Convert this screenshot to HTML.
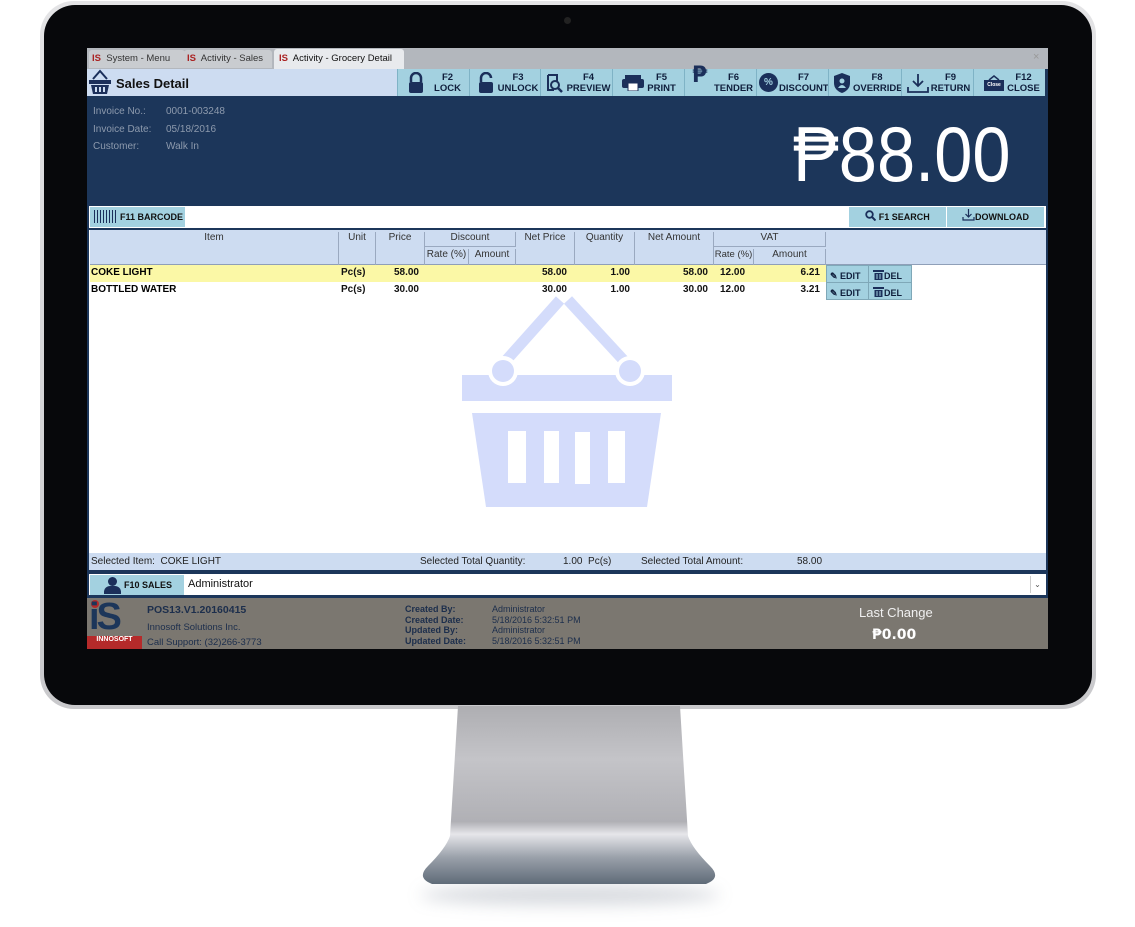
<!DOCTYPE html>
<html><head><meta charset="utf-8"><style>
*{box-sizing:border-box;margin:0;padding:0}
body{width:1135px;height:927px;background:#fff;position:relative;overflow:hidden;font-family:"Liberation Sans",sans-serif}
.a{position:absolute}
.t{font-size:10px;color:#222}
.b{font-weight:bold}
.btn{position:absolute;top:69px;height:27px;background:#a3d1e0;border-left:1px solid #7fb3c6;font-size:9.5px;font-weight:bold;color:#0f1e3c;text-align:center;line-height:11px}
.btn svg{position:absolute}
.hd{position:absolute;font-size:10px;color:#333;text-align:center;border-right:1px solid #9aa9c0}
.c{position:absolute;font-size:10px;font-weight:bold;color:#111;text-align:right}
</style></head><body>
<!-- monitor -->
<div class="a" style="left:40px;top:1px;width:1056px;height:708px;border-radius:34px;background:linear-gradient(#e4e4e6,#c9c9cc);"></div>
<div class="a" style="left:44px;top:5px;width:1048px;height:700px;border-radius:31px;background:#07080b"></div>
<div class="a" style="left:564px;top:17px;width:7px;height:7px;border-radius:50%;background:#222"></div>
<!-- stand -->
<div class="a" style="left:420px;top:885px;width:300px;height:20px;border-radius:50%;background:rgba(90,105,125,.25);filter:blur(8px)"></div>
<svg class="a" style="left:410px;top:706px" width="320" height="185"><defs><linearGradient id="g" x1="0" y1="0" x2="0" y2="1"><stop offset="0" stop-color="#aeaeb2"/><stop offset=".3" stop-color="#c4c4c8"/><stop offset=".65" stop-color="#b0b0b5"/><stop offset=".72" stop-color="#e6e6ea"/><stop offset=".85" stop-color="#9aa1aa"/><stop offset="1" stop-color="#5f6b78"/></linearGradient></defs><path d="M48 0H270L278 130Q282 142 300 160Q312 172 296 178H22Q6 172 18 160Q36 142 40 130Z" fill="url(#g)"/></svg>
<!-- screen -->
<div class="a" style="left:87px;top:48px;width:961px;height:601px;background:#1c365a"></div>
<div class="a" style="left:87px;top:48px;width:961px;height:21px;background:#b3b7bd"></div>
<div class="a" style="left:89px;top:50px;width:96px;height:18px;background:#c9ccd0;border-radius:3px 3px 0 0"></div>
<div class="a" style="left:184px;top:50px;width:88px;height:18px;background:#c9ccd0;border-radius:3px 3px 0 0"></div>
<div class="a" style="left:274px;top:49px;width:130px;height:20px;background:#e8eaed;border-radius:3px 3px 0 0"></div>
<div class="a t" style="left:92px;top:53px;font-size:9.5px;color:#333"><b style="color:#a22">IS</b>&nbsp; System - Menu</div>
<div class="a t" style="left:187px;top:53px;font-size:9.5px;color:#333"><b style="color:#a22">IS</b>&nbsp; Activity - Sales</div>
<div class="a t" style="left:279px;top:53px;font-size:9.5px;color:#111"><b style="color:#a22">IS</b>&nbsp; Activity - Grocery Detail</div>
<div class="a" style="left:1033px;top:51px;font-size:11px;color:#999">×</div>
<div class="a" style="left:87px;top:69px;width:310px;height:27px;background:#cddcf1"></div>
<svg class="a" style="left:88px;top:69px" width="25" height="26"><path d="M5 10L12 2L19 10" stroke="#1b2f5a" stroke-width="2" fill="none"/><rect x="1" y="11" width="22" height="4" fill="#1b2f5a"/><path d="M3 16H21L19 25H5Z" fill="#1b2f5a"/><g fill="#cddcf1"><rect x="7" y="18" width="2" height="5"/><rect x="11" y="18" width="2" height="5"/><rect x="15" y="18" width="2" height="5"/></g></svg>
<div class="a b" style="left:116px;top:76px;font-size:13px;color:#111">Sales Detail</div>
<div class="btn" style="left:397px;width:72px"><svg style="left:10px;top:3px" width="16" height="22"><path d="M3 10V6A5 5 0 0 1 13 6V10" stroke="#1b2f5a" stroke-width="2.5" fill="none"/><rect x="1" y="10" width="14" height="11" rx="2" fill="#1b2f5a"/></svg><div style="margin-left:28px;margin-top:3px">F2<br>LOCK</div></div>
<div class="btn" style="left:469px;width:71px"><svg style="left:8px;top:3px" width="16" height="22"><path d="M3 10V6A5 5 0 0 1 13 6" stroke="#1b2f5a" stroke-width="2.5" fill="none"/><rect x="1" y="10" width="14" height="11" rx="2" fill="#1b2f5a"/></svg><div style="margin-left:26px;margin-top:3px">F3<br>UNLOCK</div></div>
<div class="btn" style="left:540px;width:72px"><svg style="left:4px;top:4px" width="18" height="20"><path d="M3 2H12V8M3 2V17H9" stroke="#1b2f5a" stroke-width="2" fill="none"/><circle cx="10" cy="12" r="4" stroke="#1b2f5a" stroke-width="2" fill="none"/><path d="M13 15L17 19" stroke="#1b2f5a" stroke-width="2.5"/></svg><div style="margin-left:24px;margin-top:3px">F4<br>PREVIEW</div></div>
<div class="btn" style="left:612px;width:72px"><svg style="left:9px;top:6px" width="22" height="16"><rect x="3" y="0" width="16" height="4" fill="#1b2f5a"/><rect x="0" y="4" width="22" height="9" rx="2" fill="#1b2f5a"/><rect x="6" y="8" width="10" height="8" fill="#fff" stroke="#1b2f5a"/></svg><div style="margin-left:26px;margin-top:3px">F5<br>PRINT</div></div>
<div class="btn" style="left:684px;width:72px"><span style="position:absolute;left:7px;top:1px;font-size:22px;color:#1b2f5a;font-family:'DejaVu Sans',sans-serif">₱</span><div style="margin-left:26px;margin-top:3px">F6<br>TENDER</div></div>
<div class="btn" style="left:756px;width:72px"><span style="position:absolute;left:2px;top:4px;width:19px;height:19px;border-radius:50%;background:#1b2f5a;color:#a3d1e0;font-size:10px;line-height:19px">%</span><div style="margin-left:22px;margin-top:3px">F7<br>DISCOUNT</div></div>
<div class="btn" style="left:828px;width:73px"><svg style="left:5px;top:4px" width="16" height="20"><path d="M8 0L16 3V10Q16 17 8 20Q0 17 0 10V3Z" fill="#1b2f5a"/><circle cx="8" cy="8" r="2.5" fill="#a3d1e0"/><path d="M4 15Q8 9 12 15Z" fill="#a3d1e0"/></svg><div style="margin-left:24px;margin-top:3px">F8<br>OVERRIDE</div></div>
<div class="btn" style="left:901px;width:72px"><svg style="left:5px;top:4px" width="22" height="20"><path d="M11 1V13M6 8L11 13L16 8M1 14V19H21V14" stroke="#1b2f5a" stroke-width="1.8" fill="none"/></svg><div style="margin-left:26px;margin-top:3px">F9<br>RETURN</div></div>
<div class="btn" style="left:973px;width:72px"><svg style="left:9px;top:4px" width="22" height="20"><path d="M6 7L11 3L16 7" stroke="#1b2f5a" stroke-width="1.5" fill="none"/></svg><span style="position:absolute;left:10px;top:11px;width:20px;height:11px;background:#1b2f5a;color:#fff;font-size:5px;line-height:11px">Close</span><div style="margin-left:28px;margin-top:3px">F12<br>CLOSE</div></div>
<div class="a" style="left:93px;top:103px;font-size:10px;color:#8d9aad;line-height:17.5px">Invoice No.:<br>Invoice Date:<br>Customer:</div>
<div class="a" style="left:166px;top:103px;font-size:10px;color:#8d9aad;line-height:17.5px">0001-003248<br>05/18/2016<br>Walk In</div>
<div class="a" style="left:793px;top:115px;font-size:78px;line-height:78px;color:#fff;font-family:'Liberation Sans','DejaVu Sans',sans-serif;transform:scaleX(0.88);transform-origin:0 0;white-space:nowrap">₱88.00</div>
<!-- barcode row -->
<div class="a" style="left:89px;top:206px;width:957px;height:22px;background:#fff"></div>
<div class="a b" style="left:90px;top:207px;width:95px;height:20px;background:#a3d1e0;font-size:9px;line-height:20px;padding-left:30px;color:#111">F11 BARCODE</div>
<div class="a" style="left:94px;top:210px;width:22px;height:13px;background:repeating-linear-gradient(90deg,#1b2f5a 0 1px,transparent 1px 3px)"></div>
<div class="a b" style="left:849px;top:207px;width:97px;height:20px;background:#a3d1e0;font-size:9px;line-height:20px;text-align:center;color:#111"><svg width="11" height="11" style="vertical-align:-1px"><circle cx="4.5" cy="4.5" r="3.3" stroke="#1b2f5a" stroke-width="1.8" fill="none"/><path d="M7 7L10.5 10.5" stroke="#1b2f5a" stroke-width="2"/></svg> F1 SEARCH</div>
<div class="a b" style="left:947px;top:207px;width:97px;height:20px;background:#a3d1e0;font-size:9px;line-height:20px;text-align:center;color:#111"><svg width="13" height="12" style="vertical-align:-1px"><path d="M6.5 0V8M3.5 5L6.5 8L9.5 5M1 8V11H12V8" stroke="#1b2f5a" stroke-width="1.2" fill="none"/></svg>DOWNLOAD</div>
<!-- grid -->
<div class="a" style="left:89px;top:230px;width:957px;height:323px;background:#fff"></div>
<div class="a" style="left:90px;top:230px;width:956px;height:35px;background:#cddcf1;border-bottom:1px solid #8f9fb8"></div>
<div class="hd" style="left:90px;top:232px;width:249px;height:33px">Item</div>
<div class="hd" style="left:339px;top:232px;width:37px;height:33px">Unit</div>
<div class="hd" style="left:376px;top:232px;width:49px;height:33px">Price</div>
<div class="hd" style="left:425px;top:232px;width:91px;height:15px;border-bottom:1px solid #9aa9c0">Discount</div>
<div class="hd" style="left:425px;top:249px;width:44px;height:16px">Rate (%)</div>
<div class="hd" style="left:469px;top:249px;width:47px;height:16px">Amount</div>
<div class="hd" style="left:516px;top:232px;width:59px;height:33px">Net Price</div>
<div class="hd" style="left:575px;top:232px;width:60px;height:33px">Quantity</div>
<div class="hd" style="left:635px;top:232px;width:79px;height:33px">Net Amount</div>
<div class="hd" style="left:714px;top:232px;width:112px;height:15px;border-bottom:1px solid #9aa9c0">VAT</div>
<div class="hd" style="left:714px;top:249px;width:40px;height:16px;font-size:9.5px;white-space:nowrap;overflow:hidden">Rate (%)</div>
<div class="hd" style="left:754px;top:249px;width:72px;height:16px">Amount</div>
<svg class="a" style="left:440px;top:280px" width="250" height="240"><g fill="#d4dcfb"><path d="M62 85L120 20" stroke="#d4dcfb" stroke-width="11"/><path d="M128 20L188 85" stroke="#d4dcfb" stroke-width="11"/><rect x="22" y="95" width="210" height="26"/><circle cx="63" cy="91" r="15" fill="#fff"/><circle cx="190" cy="91" r="15" fill="#fff"/><circle cx="63" cy="91" r="11"/><circle cx="190" cy="91" r="11"/><path d="M32 133H221L207 227H46Z"/></g><g fill="#fff"><rect x="68" y="151" width="18" height="52"/><rect x="104" y="151" width="15" height="52"/><rect x="135" y="152" width="15" height="52"/><rect x="168" y="151" width="17" height="52"/></g></svg>
<div class="a" style="left:90px;top:265px;width:736px;height:17px;background:#fbf8a6"></div>
<div class="a b" style="left:91px;top:267px;font-size:10px">COKE LIGHT</div>
<div class="a b" style="left:91px;top:284px;font-size:10px">BOTTLED WATER</div>
<div class="c" style="left:341px;top:267px;width:24px;text-align:left">Pc(s)</div><div class="c" style="left:341px;top:284px;width:24px;text-align:left">Pc(s)</div>
<div class="c" style="left:376px;top:267px;width:43px">58.00</div><div class="c" style="left:376px;top:284px;width:43px">30.00</div>
<div class="c" style="left:516px;top:267px;width:51px">58.00</div><div class="c" style="left:516px;top:284px;width:51px">30.00</div>
<div class="c" style="left:575px;top:267px;width:55px">1.00</div><div class="c" style="left:575px;top:284px;width:55px">1.00</div>
<div class="c" style="left:635px;top:267px;width:73px">58.00</div><div class="c" style="left:635px;top:284px;width:73px">30.00</div>
<div class="c" style="left:720px;top:267px;text-align:left">12.00</div><div class="c" style="left:720px;top:284px;text-align:left">12.00</div>
<div class="c" style="left:754px;top:267px;width:66px">6.21</div><div class="c" style="left:754px;top:284px;width:66px">3.21</div>
<div class="a" style="left:826px;top:265px;width:86px;height:35px;background:#a3d1e0;border:1px solid #7fa8b8"></div>
<div class="a" style="left:826px;top:282px;width:86px;height:1px;background:#7fa8b8"></div>
<div class="a" style="left:868px;top:265px;width:1px;height:35px;background:#7fa8b8"></div>
<div class="a b" style="left:830px;top:268px;font-size:9px;color:#0f1e3c;line-height:17px">✎ EDIT<br>✎ EDIT</div>
<div class="a b" style="left:873px;top:268px;font-size:9px;color:#0f1e3c;line-height:17px"><svg width="11" height="11" style="vertical-align:-1px"><rect x="0" y="1" width="11" height="2" fill="#1b2f5a"/><path d="M1.5 4H9.5V11H1.5Z" fill="#1b2f5a"/><path d="M4 5V10M7 5V10" stroke="#a3d1e0"/></svg>DEL<br><svg width="11" height="11" style="vertical-align:-1px"><rect x="0" y="1" width="11" height="2" fill="#1b2f5a"/><path d="M1.5 4H9.5V11H1.5Z" fill="#1b2f5a"/><path d="M4 5V10M7 5V10" stroke="#a3d1e0"/></svg>DEL</div>
<!-- status -->
<div class="a" style="left:89px;top:553px;width:957px;height:17px;background:#cddcf1"></div>
<div class="a" style="left:91px;top:556px;font-size:10px;color:#222">Selected Item:&nbsp; COKE LIGHT</div>
<div class="a" style="left:420px;top:556px;font-size:10px;color:#222">Selected Total Quantity:</div>
<div class="a" style="left:563px;top:556px;font-size:10px;color:#222">1.00&nbsp; Pc(s)</div>
<div class="a" style="left:641px;top:556px;font-size:10px;color:#222">Selected Total Amount:</div>
<div class="a" style="left:797px;top:556px;font-size:10px;color:#222">58.00</div>
<div class="a" style="left:89px;top:574px;width:957px;height:21px;background:#fff"></div>
<div class="a b" style="left:90px;top:575px;width:94px;height:20px;background:#a3d1e0;font-size:9px;line-height:20px;padding-left:34px;color:#111">F10 SALES</div>
<div class="a" style="left:108px;top:577px;width:9px;height:9px;border-radius:50%;background:#1b2f5a"></div>
<div class="a" style="left:104px;top:586px;width:17px;height:8px;border-radius:6px 6px 0 0;background:#1b2f5a"></div>
<div class="a" style="left:188px;top:578px;font-size:11px;color:#111">Administrator</div>
<div class="a" style="left:1030px;top:576px;width:14px;height:17px;border-left:1px solid #ccc;font-size:8px;text-align:center;line-height:17px;color:#555">⌄</div>
<!-- footer -->
<div class="a" style="left:87px;top:598px;width:961px;height:51px;background:#7b7770"></div>
<div class="a" style="left:91px;top:600px;width:8px;height:8px;border-radius:50%;background:#b52a2a"></div>
<div class="a b" style="left:89px;top:598px;font-size:38px;color:#1c365a;line-height:38px;letter-spacing:-3px">iS</div>
<div class="a" style="left:87px;top:636px;width:55px;height:13px;background:#b52a2a;color:#fff;font-size:7px;font-weight:bold;text-align:center;line-height:8px">INNOSOFT</div>
<div class="a b" style="left:147px;top:604px;font-size:10.5px;color:#1c2e4c">POS13.V1.20160415</div>
<div class="a" style="left:147px;top:620px;font-size:9.5px;color:#1c2e4c;line-height:15px">Innosoft Solutions Inc.<br>Call Support: (32)266-3773</div>
<div class="a b" style="left:405px;top:604px;font-size:9px;color:#1c2e4c;line-height:10.5px">Created By:<br>Created Date:<br>Updated By:<br>Updated Date:</div>
<div class="a" style="left:492px;top:604px;font-size:9px;color:#1c2e4c;line-height:10.5px">Administrator<br>5/18/2016 5:32:51 PM<br>Administrator<br>5/18/2016 5:32:51 PM</div>
<div class="a" style="left:859px;top:605px;font-size:13px;color:#f0f0f0">Last Change</div>
<div class="a b" style="left:872px;top:627px;font-size:14px;color:#fff;font-family:'DejaVu Sans',sans-serif">₱0.00</div>
</body></html>
